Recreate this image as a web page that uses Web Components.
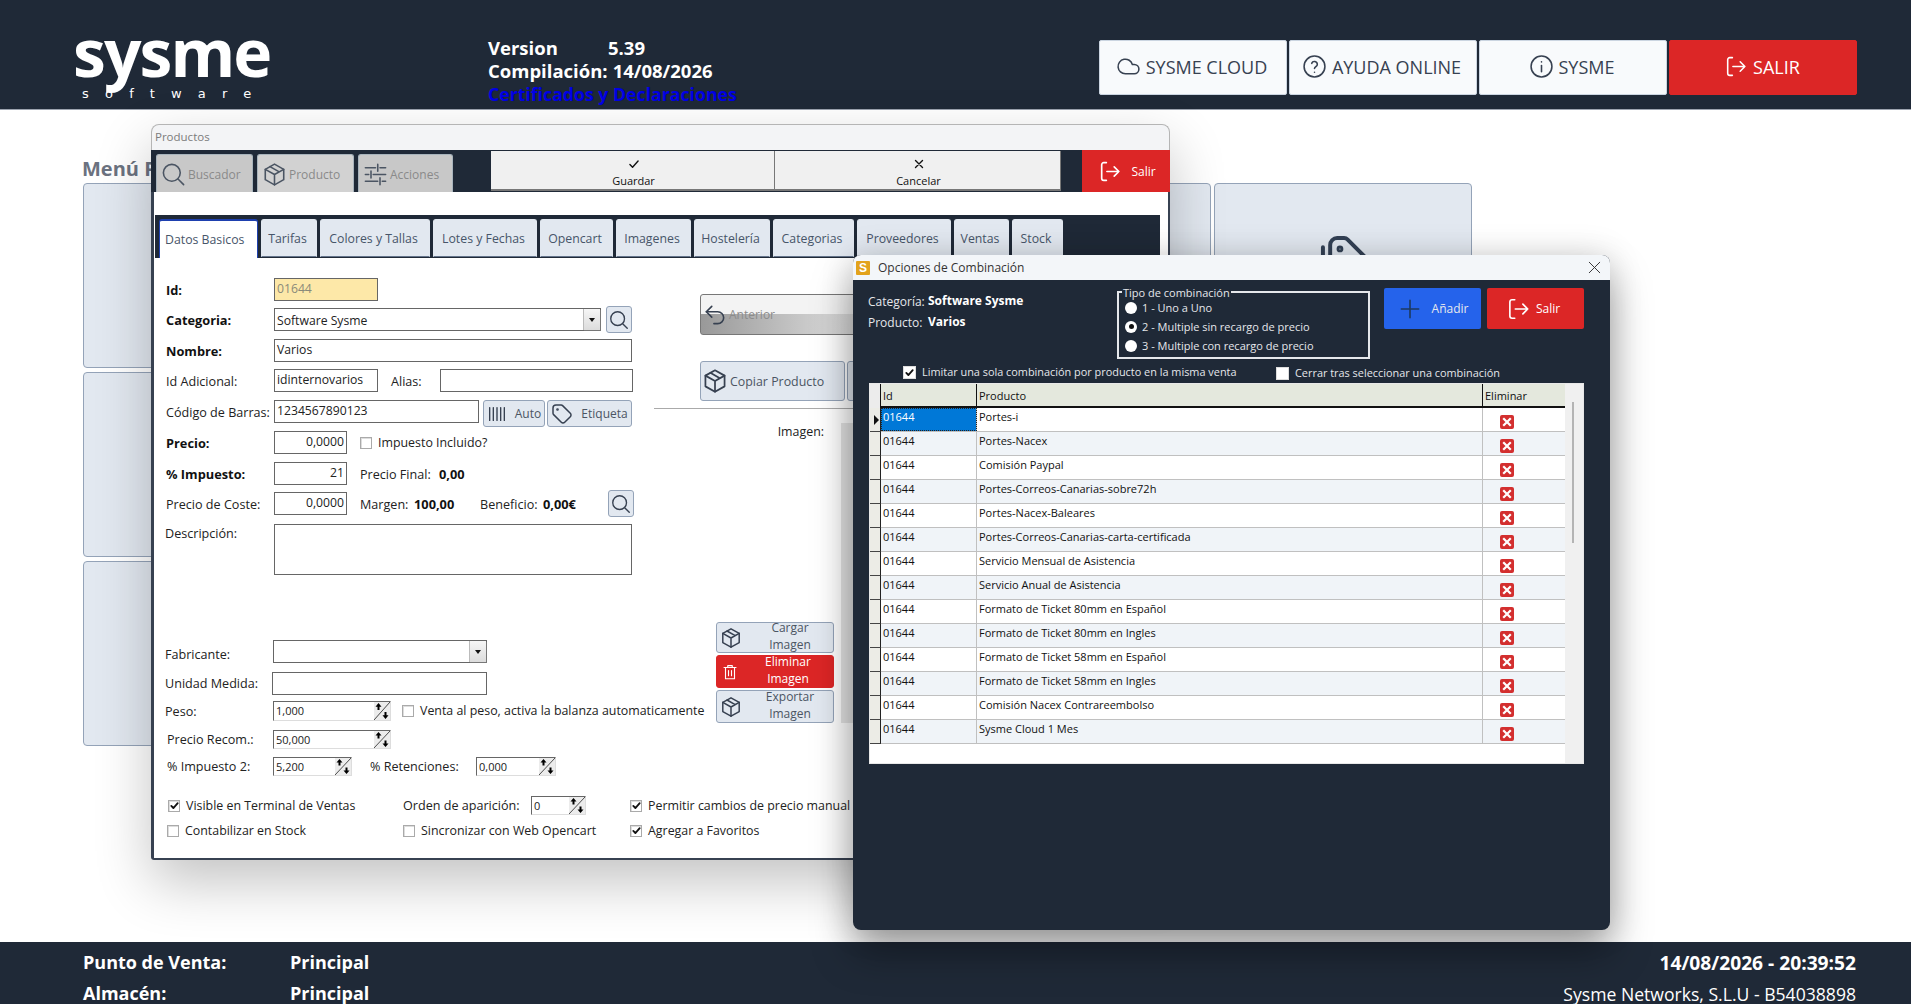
<!DOCTYPE html>
<html lang="es"><head><meta charset="utf-8"><title>Sysme</title>
<style>
html,body{margin:0;height:100%;overflow:hidden;background:#fff;font-family:"Open Sans","Noto Sans",sans-serif;font-size:12px;color:#222}
body{display:flex;flex-direction:column;position:relative}
</style></head><body>
<sy-header></sy-header>
<sy-menu heading="Menú Principal"></sy-menu>
<sy-footer></sy-footer>

<sy-window title="Productos" style="left:151px;top:124px;width:1019px;height:736px">
  <sy-product-bar></sy-product-bar>
  <sy-tabstrip></sy-tabstrip>
  <sy-panel>
    <div slot="left">
     <div style="--lab:2px">
      <sy-row style="margin-top:20px"><sy-lab w="108" b>Id:</sy-lab><sy-input w="104" bg="#fde8a8" c="#8a8a7a">01644</sy-input></sy-row>
      <sy-row style="margin-top:7px"><sy-lab w="108" b>Categoria:</sy-lab><sy-select w="327">Software Sysme</sy-select><sy-btn icon="search" w="26" h="27" isz="22" style="margin-left:5px"></sy-btn></sy-row>
      <sy-row style="margin-top:8px"><sy-lab w="108" b>Nombre:</sy-lab><sy-input w="358">Varios</sy-input></sy-row>
      <sy-row style="margin-top:7px"><sy-lab w="108">Id Adicional:</sy-lab><sy-input w="104">idinternovarios</sy-input><sy-lab w="49" style="margin-left:13px">Alias:</sy-lab><sy-input w="193"></sy-input></sy-row>
      <sy-row style="margin-top:8px"><sy-lab w="108">Código de Barras:</sy-lab><sy-input w="205">1234567890123</sy-input><sy-btn icon="barcode" w="62" h="27" isz="22" style="margin:4px 0 0 4px">Auto</sy-btn><sy-btn icon="tag" w="85" h="27" isz="24" style="margin:4px 0 0 2px">Etiqueta</sy-btn></sy-row>
      <sy-row style="margin-top:8px"><sy-lab w="108" b>Precio:</sy-lab><sy-input w="73" align="right">0,0000</sy-input><sy-check style="margin-left:13px">Impuesto Incluido?</sy-check></sy-row>
      <sy-row style="margin-top:8px"><sy-lab w="108" b>% Impuesto:</sy-lab><sy-input w="73" align="right">21</sy-input><sy-lab w="79" style="margin-left:13px">Precio Final:</sy-lab><sy-lab b>0,00</sy-lab></sy-row>
      <sy-row style="margin-top:7px"><sy-lab w="108">Precio de Coste:</sy-lab><sy-input w="73" align="right">0,0000</sy-input><sy-lab w="54" style="margin-left:13px">Margen:</sy-lab><sy-lab w="66" b>100,00</sy-lab><sy-lab w="63">Beneficio:</sy-lab><sy-lab w="65" b>0,00€</sy-lab><sy-btn icon="search" w="26" h="27" isz="22"></sy-btn></sy-row>
     </div>
      <sy-row style="margin-top:9px;height:51px;align-items:flex-start"><sy-lab w="109" style="margin-left:-1px;height:19px">Descripción:</sy-lab><sy-input w="358" h="51"></sy-input></sy-row>

      <sy-row style="margin-top:65px;--lab:6px"><sy-lab w="108" style="margin-left:-1px">Fabricante:</sy-lab><sy-select w="214"></sy-select></sy-row>
      <sy-row style="margin-top:9px"><sy-lab w="107" style="margin-left:-1px">Unidad Medida:</sy-lab><sy-input w="215"></sy-input></sy-row>
      <sy-row style="margin-top:6px;height:20px"><sy-lab w="108" style="margin-left:-1px">Peso:</sy-lab><sy-spin w="118">1,000</sy-spin><sy-check style="margin-left:11px">Venta al peso, activa la balanza automaticamente</sy-check></sy-row>
      <sy-row style="margin-top:9px;height:19px"><sy-lab w="106" style="margin-left:1px">Precio Recom.:</sy-lab><sy-spin w="118">50,000</sy-spin></sy-row>
      <sy-row style="margin-top:8px;height:19px"><sy-lab w="106" style="margin-left:1px">% Impuesto 2:</sy-lab><sy-spin w="79">5,200</sy-spin><sy-lab w="106" style="margin-left:18px">% Retenciones:</sy-lab><sy-spin w="80">0,000</sy-spin></sy-row>
      <sy-row style="margin-top:20px;height:19px"><sy-check checked w="235" style="margin-left:2px">Visible en Terminal de Ventas</sy-check><sy-lab w="128">Orden de aparición:</sy-lab><sy-spin w="55">0</sy-spin><sy-check checked style="margin-left:44px">Permitir cambios de precio manual</sy-check></sy-row>
      <sy-row style="margin-top:6px;height:19px"><sy-check w="236" style="margin-left:1px">Contabilizar en Stock</sy-check><sy-check w="227">Sincronizar con Web Opencart</sy-check><sy-check checked>Agregar a Favoritos</sy-check></sy-row>
    </div>
    <div slot="right">
      <sy-btn kind="anterior" icon="undo" w="300" h="41" isz="26" style="margin:36px 0 0 46px">Anterior</sy-btn>
      <sy-row style="margin:26px 0 0 46px;height:40px;overflow:visible"><sy-btn icon="box" left w="145" h="40" isz="28">Copiar Producto</sy-btn><sy-btn icon="box" w="145" h="40" isz="26" style="margin-left:2px"></sy-btn></sy-row>
      <sy-image-area></sy-image-area>
    </div>
  </sy-panel>
</sy-window>

<sy-window kind="modal" title="Opciones de Combinación" style="left:853px;top:255px;width:757px;height:675px">
  <sy-combo></sy-combo>
  <sy-grid>
    <sy-grow selected>Portes-i</sy-grow>
    <sy-grow>Portes-Nacex</sy-grow>
    <sy-grow>Comisión Paypal</sy-grow>
    <sy-grow>Portes-Correos-Canarias-sobre72h</sy-grow>
    <sy-grow>Portes-Nacex-Baleares</sy-grow>
    <sy-grow>Portes-Correos-Canarias-carta-certificada</sy-grow>
    <sy-grow>Servicio Mensual de Asistencia</sy-grow>
    <sy-grow>Servicio Anual de Asistencia</sy-grow>
    <sy-grow>Formato de Ticket 80mm en Español</sy-grow>
    <sy-grow>Formato de Ticket 80mm en Ingles</sy-grow>
    <sy-grow>Formato de Ticket 58mm en Español</sy-grow>
    <sy-grow>Formato de Ticket 58mm en Ingles</sy-grow>
    <sy-grow>Comisión Nacex Contrareembolso</sy-grow>
    <sy-grow>Sysme Cloud 1 Mes</sy-grow>
  </sy-grid>
</sy-window>

<script>
const ICONS={
 search:'<circle cx="10.5" cy="10.5" r="7.5"/><path d="M16 16l5 5"/>',
 box:'<path d="M12 2.8l8.2 4.6v9.2L12 21.2l-8.2-4.6V7.4z"/><path d="M12 12l8.2-4.6M12 12v9.2M12 12L3.8 7.4M8 5l8.2 4.7"/>',
 sliders:'<path d="M3 6h9M16 6h5M14 3v6M3 12h3M10 12h11M8 9v6M3 18h11M18 18h3M16 15v6"/>',
 logout:'<path d="M9 3.5H6.5a2 2 0 0 0-2 2v13a2 2 0 0 0 2 2H9"/><path d="M9.5 12H21M16.5 7.5L21 12l-4.500 4.500"/>',
 cloud:'<path d="M17.500 19H9a7 7 0 1 1 6.710-9h1.790a4.500 4.500 0 1 1 0 9z"/>',
 help:'<circle cx="12" cy="12" r="10"/><path d="M9.300 9a2.800 2.800 0 0 1 5.400 1c0 1.900-2.700 2.300-2.700 4"/><path d="M12 17.500v.1"/>',
 info:'<circle cx="12" cy="12" r="10"/><path d="M12 11v6"/><path d="M12 7.500v.1"/>',
 tag:'<circle cx="7.500" cy="7.500" r=".6"/><path d="M3 6v5.200a2 2 0 0 0 .6 1.400l7.700 7.700a2.400 2.400 0 0 0 3.400 0l5.600-5.600a2.400 2.400 0 0 0 0-3.400l-7.700-7.700A2 2 0 0 0 11.200 3H6a3 3 0 0 0-3 3z"/>',
 tags:'<circle cx="10.700" cy="7.700" r=".6"/><path d="M6.500 6a3 3 0 0 1 3-3h3a2 2 0 0 1 1.400.6l7.200 7.200a2.400 2.400 0 0 1 0 3.400l-5.600 5.600a2.400 2.400 0 0 1-3.400 0L7.100 12.800a2 2 0 0 1-.6-1.400z"/><path d="M3.400 7v5.500a2 2 0 0 0 .6 1.400l6 6"/>',
 barcode:'<path d="M4 5v14M8 5v14M12 5v14M16 5v14M20 5v14"/>',
 undo:'<path d="M9 14L4 9l5-5"/><path d="M4 9h10.500a5.500 5.500 0 0 1 0 11H11"/>',
 trash:'<path d="M4 6h16M9 6V3.500h6V6M6 6v15h12V6M10 10v7M14 10v7"/>',
 plus:'<path d="M12 4v16M4 12h16"/>',
 check:'<path d="M5 13l4.500 4.500L19 7"/>',
 x:'<path d="M6 6l12 12M18 6L6 18"/>'
};
function icon(n,s,c,w){return `<svg width="${s}" height="${s}" viewBox="0 0 24 24" fill="none" stroke="${c||'currentColor'}" stroke-width="${w||1.8}" stroke-linecap="round" stroke-linejoin="round" style="flex:none;display:block">${ICONS[n]}</svg>`}
function def(name,css,html){customElements.define(name,class extends HTMLElement{connectedCallback(){if(this.shadowRoot)return;const r=this.attachShadow({mode:'open'});r.innerHTML=`<style>${css}</style>`+(typeof html==='function'?html(this):html)}})}

/* Top bar */
def('sy-topbtn',`:host{display:flex;align-items:center;justify-content:center;gap:5px;width:188px;height:55px;box-sizing:border-box;background:#f8fafc;border:1px solid #cbd5e1;border-radius:2px;color:#374151;font-size:18px;white-space:nowrap;padding-bottom:2px}
svg{margin-left:-3px}
:host([red]){background:#dc2626;border-color:#dc2626;color:#fff}`,h=>icon(h.getAttribute('icon'),25,'currentColor',1.5)+'<slot></slot>');
def('sy-header',`:host{display:flex;flex:none;height:110px;box-sizing:border-box;background:#1f2937;border-bottom:1px solid #9ca3af;color:#fff;padding:0 54px 0 75px}
.logo{width:193px;flex:none;padding-top:18px;text-align:center}
.s{font:700 66px/66px "Open Sans",sans-serif;letter-spacing:-1.900px;margin-left:-2px}
.w{font:400 13px/14px "DejaVu Sans",sans-serif;letter-spacing:16.200px;margin-top:3px;white-space:nowrap;padding-left:7px;text-align:left}
.v{margin-left:220px;padding-top:36px;font-weight:700;font-size:18.500px;line-height:23px;white-space:nowrap;flex:none}
.v span{display:inline-block;width:120px}.v span.c{width:auto;margin-right:5px}
.l{color:#0000e6;font-size:17.700px;padding-top:1px}
.b{margin-left:auto;display:flex;gap:2px;padding-top:40px}`,
`<div class="logo"><div class="s">sysme</div><div class="w">software</div></div>
<div class="v"><div><span>Version</span>5.39</div><div><span class="c">Compilación:</span>14/08/2026</div><div class="l">Certificados y Declaraciones</div></div>
<div class="b"><sy-topbtn icon="cloud">SYSME CLOUD</sy-topbtn><sy-topbtn icon="help">AYUDA ONLINE</sy-topbtn><sy-topbtn icon="info">SYSME</sy-topbtn><sy-topbtn icon="logout" red>SALIR</sy-topbtn></div>`);
def('sy-footer',`:host{display:flex;flex:none;justify-content:space-between;height:62px;box-sizing:border-box;background:#1f2937;color:#fff;padding:5px 55px 0 83px;font-size:18px;line-height:31px;overflow:hidden;white-space:nowrap}
b{font-weight:700}.r{display:flex}.r b:first-child{width:207px}.e{text-align:right}.e b{font-size:19.200px}.e div{font-weight:400;font-size:17.600px}`,
`<div><div class="r"><b>Punto de Venta:</b><b>Principal</b></div><div class="r"><b>Almacén:</b><b>Principal</b></div></div>
<div class="e"><b>14/08/2026 - 20:39:52</b><div>Sysme Networks, S.L.U - B54038898</div></div>`);

/* Background menu */
def('sy-menu',`:host{display:block;flex:1;min-height:0;overflow:hidden;padding:45px 0 0 82px;box-sizing:border-box}
h2{margin:0 0 1px;font:700 20px/27px "Open Sans",sans-serif;color:#6b7280}
.g{display:grid;grid-template-columns:repeat(4,279.750px) 258px;grid-auto-rows:185px;gap:4px 3px;margin-left:1px}
.c{background:#e2e8f0;border:1px solid #94a3b8;border-radius:4px;box-sizing:border-box;display:flex;justify-content:center;padding-top:47px;color:#1f2937}`,
h=>`<h2>${h.getAttribute('heading')}</h2><div class="g">${Array.from({length:15},(_,i)=>`<div class="c">${i==4?icon('tags',56,'#334155',1.700):''}</div>`).join('')}</div>`);

/* Windows */
def('sy-window',`:host{position:absolute;display:flex;flex-direction:column;box-sizing:border-box;background:#fff;border-radius:8px 8px 3px 3px;box-shadow:0 22px 55px rgba(0,0,0,.24);overflow:visible;z-index:5}
.t{height:26px;flex:none;box-sizing:border-box;background:#f3f4f6;border:1px solid #b5b5b5;border-bottom:0;border-radius:8px 8px 0 0;color:#7c7c7c;font-size:11.500px;line-height:24px;padding-left:3px}
.b{flex:1;min-height:0;display:flex;flex-direction:column;border:solid #374151;border-width:0 2px 2px 3px;border-radius:0 0 3px 3px}
:host([kind=modal]){z-index:6;background:#1f2937;border-radius:8px;box-shadow:0 22px 40px rgba(0,0,0,.36),0 0 34px rgba(0,0,0,.14)}
:host([kind=modal]) .t{height:25px;background:#f3f6f9;border:0;color:#333;font-size:12px;display:flex;align-items:center;justify-content:flex-start;padding:0 0 0 3px;line-height:25px}
:host([kind=modal]) .b{border:0}
.ic{width:14px;height:14px;background:#e2a21b;color:#fff;font:700 12px/14px "Liberation Sans",sans-serif;text-align:center;margin-right:8px;border-radius:1px;flex:none}
.cl{margin-left:auto;margin-right:5px;color:#333}`,
h=>h.getAttribute('kind')==='modal'
 ?`<div class="t"><span class="ic">S</span><span>${h.getAttribute('title')}</span><span class="cl">${icon('x',21,'#333',1.100)}</span></div><div class="b"><slot></slot></div>`
 :`<div class="t">${h.getAttribute('title')}</div><div class="b"><slot></slot></div>`);

/* Product toolbar */
def('sy-ptab',`:host{display:flex;align-items:center;gap:1px;box-sizing:border-box;height:38px;margin-top:4px;background:#c8c8c8;border:1px solid #a8b4bc;border-bottom:0;border-radius:3px 3px 0 0;padding:2px 0 0 3px;color:#8a8a8a;font-size:12px}
:host([on]){background:#d2d2d2}`,h=>icon(h.getAttribute('icon'),27,'#4b5563',1.400)+'<slot></slot>');
def('sy-cmd',`:host{display:flex;flex-direction:column;align-items:center;box-sizing:border-box;height:40px;margin-top:1px;background:#f0f0f0;border:1px solid #777;border-width:0 1px 2px 0;color:#111;font-size:11px;line-height:14px;padding:6px 0 0 2px}`,
h=>icon(h.getAttribute('icon'),14,'#111',2.400)+'<span style="margin-top:3px"><slot></slot></span>');
def('sy-product-bar',`:host{display:flex;flex:none;height:42px;background:#1f2937;position:relative;margin-left:-3px;margin-right:-2px;padding-left:5px}
.tabs{display:flex;gap:4px}
.salir{margin-left:auto;width:88px;background:#dc2626;color:#fff;display:flex;align-items:center;justify-content:center;gap:9px;font-size:12px;padding-left:1px;box-sizing:border-box}`,
`<div class="tabs"><sy-ptab icon="search" style="width:97px">Buscador</sy-ptab><sy-ptab icon="box" on style="width:97px">Producto</sy-ptab><sy-ptab icon="sliders" style="width:95px">Acciones</sy-ptab></div>
<sy-cmd icon="check" style="width:284px;margin-left:38px">Guardar</sy-cmd><sy-cmd icon="x" style="width:286px">Cancelar</sy-cmd>
<div class="salir">${icon('logout',25,'#fff',1.600)}<span>Salir</span></div>`);
def('sy-tab',`:host{display:flex;align-items:center;justify-content:center;box-sizing:border-box;height:38px;background:#e2e8f0;border:1px solid #e2e8f0;border-bottom:1px solid #64748b;border-radius:3px 3px 0 0;color:#475569;font-size:12.300px;white-space:nowrap;padding-right:3px}
:host([on]){background:#fff;border-color:#1e40af #1e40af #fff #1e40af;border-width:2px 1px 0 1px;height:39px;justify-content:flex-start;padding:0 0 0 5px}`,'<slot></slot>');
def('sy-tabstrip',`:host{display:flex;flex:none;gap:3px;height:43px;box-sizing:border-box;margin:23px 8px 0 1px;padding:4px 0 0 4px;background:#1f2937}`,
()=>[['Datos Basicos',99,1],['Tarifas',56],['Colores y Tallas',110],['Lotes y Fechas',104],['Opencart',73],['Imagenes',75],['Hostelería',76],['Categorias',81],['Proveedores',94],['Ventas',55],['Stock',51]].map(t=>`<sy-tab ${t[2]?'on':''} style="width:${t[1]}px">${t[0]}</sy-tab>`).join(''));

/* Form parts */
def('sy-panel',`:host{display:flex;flex:1;min-height:0}
.l{width:500px;flex:none;box-sizing:border-box;padding-left:12px}
.r{flex:1;min-width:0}`,'<div class="l"><slot name="left"></slot></div><div class="r"><slot name="right"></slot></div>');
def('sy-row',`:host{display:flex;align-items:center;height:23px;white-space:nowrap;color:#222}`,'<slot></slot>');
def('sy-lab',`:host{display:block;flex:none;line-height:19px;font-size:12.600px;white-space:nowrap;padding-top:var(--lab,0);box-sizing:content-box}
:host([b]){font-weight:700;color:#111;font-size:12.800px}`,h=>{if(h.hasAttribute('w'))h.style.width=h.getAttribute('w')+'px';return '<slot></slot>'});
def('sy-input',`:host{display:block;flex:none;box-sizing:border-box;height:23px;background:#fff;border:1px solid #666;padding:0 2px;line-height:20px;font-size:12.200px;color:#222;white-space:nowrap;overflow:hidden}
:host([align=right]){text-align:right}`,h=>{h.style.width=h.getAttribute('w')+'px';if(h.getAttribute('h'))h.style.height=h.getAttribute('h')+'px';if(h.getAttribute('bg'))h.style.background=h.getAttribute('bg');if(h.getAttribute('c'))h.style.color=h.getAttribute('c');return '<slot></slot>'});
def('sy-select',`:host{display:flex;flex:none;align-items:center;box-sizing:border-box;height:23px;background:#fff;border:1px solid #666;padding-left:2px;font-size:12.200px;color:#222}
span{flex:1;padding-top:2px}.a{width:16px;height:21px;background:linear-gradient(#f6f6f6,#dcdcdc);border-left:1px solid #bbb;box-shadow:1px 1px 0 #777;display:flex;align-items:center;justify-content:center;flex:none}
.a i{border:solid transparent;border-width:4px 3.500px 0;border-top-color:#111;display:block}`,h=>{h.style.width=h.getAttribute('w')+'px';return '<span><slot></slot></span><div class="a"><i></i></div>'});
def('sy-spin',`:host{display:flex;flex:none;box-sizing:border-box;height:100%;background:#fff;border:1px solid #999;border-right-color:#ddd;border-bottom-color:#ddd;border-left-color:#666;border-top-color:#666;font-size:11px;line-height:17px;padding-left:2px;color:#222;overflow:hidden}
span{flex:1}svg{flex:none;display:block;background:#ececec}`,h=>{h.style.width=h.getAttribute('w')+'px';return `<span><slot></slot></span><svg width="16" height="100%" viewBox="0 0 16 19" preserveAspectRatio="none"><path d="M0 19L16 0" stroke="#444" stroke-width="1"/><path d="M4.500 1l3 4h-2v3.500h-2V5h-2zM11.500 18l-3-4h2v-3.500h2V14h2z" fill="#000"/></svg>`});
def('sy-check',`:host{display:flex;flex:none;align-items:center;font-size:12.400px;white-space:nowrap;line-height:18px}
.k{width:10px;height:10px;background:#fff;border:1px solid #aaa;box-shadow:inset 1px 1px 0 #ddd;margin-right:6px;flex:none;display:flex;align-items:center;justify-content:center}
:host([dark]){color:#e5e7eb;font-size:10.900px}
:host([dark]) .k{width:11px;height:11px;border:1px solid #ddd;box-shadow:none}`,h=>{if(h.hasAttribute('w'))h.style.width=h.getAttribute('w')+'px';return `<div class="k">${h.hasAttribute('checked')?icon('check',11,'#111',4):''}</div><slot></slot>`});
def('sy-btn',`:host{display:flex;flex:none;align-items:center;box-sizing:border-box;background:#e2e8f0;border:1px solid #94a3b8;border-radius:3px;color:#4b5563;font-size:12px;white-space:nowrap;padding-left:2px;gap:4px;overflow:hidden;line-height:17px}
.s{flex:1;text-align:center;white-space:nowrap}
:host([left]) .s{text-align:left;padding-top:1px}
:host([left]){gap:1px;font-size:12.400px;padding-left:0}
:host([kind=anterior]){background:linear-gradient(#f3f3f3 0 50%,transparent 50%),linear-gradient(90deg,#999,#ddd 50%,#ccc);border-color:#777;color:#8c8c8c;padding-left:1px;gap:1px}
:host([kind=anterior]) .s{flex:none}
:host([kind=red]){background:#dc2626;border-color:#dc2626;color:#fff}
:host([stack]) .s{padding-bottom:3px}
:host([empty]){justify-content:center;padding:0}:host([empty]) .s{display:none}`,
h=>{h.style.width=h.getAttribute('w')+'px';h.style.height=h.getAttribute('h')+'px';if(!h.textContent.trim())h.setAttribute('empty','');return icon(h.getAttribute('icon'),+h.getAttribute('isz')||20,h.getAttribute('kind')==='red'?'#fff':'#374151',1.500)+'<span class="s"><slot></slot></span>'});
def('sy-image-area',`:host{display:block}
hr{border:0;border-top:1px solid #aaa;margin:7px 0 0;height:0}
.w{display:flex;margin-top:14px}
.a{width:187px;flex:none;position:relative;height:300px;display:flex;flex-direction:column}
.n{text-align:right;padding-right:17px;line-height:17px;font-size:12.400px;color:#222}
.bs{margin:auto 7px 0 62px;display:flex;flex-direction:column;gap:2px}
.p{flex:1;height:300px;background:#e6e6e6}`,
`<hr><div class="w"><div class="a"><div class="n">Imagen:</div><div class="bs"><sy-btn stack icon="box" w="118" h="31" isz="24">Cargar<br>Imagen</sy-btn><sy-btn stack icon="trash" kind="red" w="118" h="33" isz="18" style="padding-left:4px">Eliminar<br>Imagen</sy-btn><sy-btn stack icon="box" w="118" h="33" isz="24">Exportar<br>Imagen</sy-btn></div></div><div class="p"></div></div>`);

/* Combination dialog */
def('sy-radio',`:host{display:flex;align-items:center;height:19px;gap:5px;font-size:11px;color:#e5e7eb;white-space:nowrap}
i{width:12px;height:12px;border-radius:50%;background:#fff;display:flex;align-items:center;justify-content:center;flex:none}
b{width:5px;height:5px;border-radius:50%;background:#111}`,h=>`<i>${h.hasAttribute('on')?'<b></b>':''}</i><slot></slot>`);
def('sy-action',`:host{display:flex;align-items:center;justify-content:center;gap:9px;width:97px;height:41px;border-radius:2px;color:#e5e7eb;font-size:12px;background:#2563eb;box-sizing:border-box}
:host([red]){background:#dc2626;color:#fff;justify-content:flex-start;padding-left:18px;gap:5px}`,h=>icon(h.getAttribute('icon'),26,h.hasAttribute('red')?'#fff':'#1e3a5f',1.500)+'<slot></slot>');
def('sy-combo',`:host{display:block;flex:none;height:103px;color:#e5e7eb;font-size:12px}
.top{display:flex}
.i{width:249px;margin-left:15px;flex:none;padding-top:11px;line-height:21px;white-space:nowrap}
.i div{display:flex}.i span{width:60px;flex:none}.i b{color:#fff;font-weight:700;margin-top:-1px}
fieldset{box-sizing:border-box;margin:11px 0 0;padding:5px 0 0 6px;width:253px;height:68px;border:2px solid #e5e7eb;position:relative}
legend{position:absolute;top:-7px;left:3px;background:#1f2937;padding:0 1px;font-size:11px;line-height:13px}
.a{display:flex;gap:6px;margin:8px 0 0 14px}
.c{display:flex;height:20px;margin-top:3px;padding-left:50px}`,
`<div class="top"><div class="i"><div><span>Categoría:</span><b>Software Sysme</b></div><div><span>Producto:</span><b>Varios</b></div></div>
<fieldset><legend>Tipo de combinación</legend><sy-radio>1 - Uno a Uno</sy-radio><sy-radio on>2 - Multiple sin recargo de precio</sy-radio><sy-radio>3 - Multiple con recargo de precio</sy-radio></fieldset>
<div class="a"><sy-action icon="plus">Añadir</sy-action><sy-action icon="logout" red>Salir</sy-action></div></div>
<div class="c"><sy-check dark checked style="width:373px">Limitar una sola combinación por producto en la misma venta</sy-check><sy-check dark style="margin-top:2px">Cerrar tras seleccionar una combinación</sy-check></div>`);
def('sy-grid',`:host{display:block;flex:none;margin-left:16px;width:715px;height:381px;box-sizing:border-box;background:#fff;border:1px solid #e8e8e8;position:relative;font-size:11px;color:#111}
.h{display:grid;grid-template-columns:11px 96px 506px 82px;height:24px;box-sizing:border-box;background:#e4e8dd;border-bottom:2px solid #111;line-height:24px}
.h div{border-right:1px solid #111;padding-left:2px}.h div:last-child{border-right:0}.h div:first-child{padding:0;background:#ececec}
.gut{position:absolute;top:0;right:0;bottom:0;width:18px;background:#f0f0f0}
.th{position:absolute;right:9px;top:18px;width:2px;height:141px;background:#b4b4b4}`,
`<div class="h"><div></div><div>Id</div><div>Producto</div><div>Eliminar</div></div><slot></slot><div class="gut"><div class="th"></div></div>`);
def('sy-grow',`:host{display:grid;grid-template-columns:11px 96px 506px 82px;height:24px;box-sizing:border-box;width:695px;background:#fff;border-bottom:1px solid #c0c0c0;line-height:18px;font-size:11px;color:#111}
:host(:nth-child(even)){background:#f0f4f8}
.s{background:#ecece6;border-right:1px solid #222;border-bottom:1px solid #444;margin-bottom:-1px;display:flex;align-items:center}
.s i{border:solid transparent;border-width:5px 0 5px 5px;border-left-color:#111;margin-left:4px}
.id,.p{border-right:1px solid #c0c0c0;padding-left:2px;white-space:nowrap}
.sel{background:#0078d7;color:#fff;outline:1px dotted #222;outline-offset:-1px}
.d{display:flex;justify-content:flex-start;padding:7px 0 0 17px}
.x{width:14px;height:14px;border-radius:2px;background:#d32f2f;display:block}`,
h=>`<div class="s">${h.hasAttribute('selected')?'<i></i>':''}</div><div class="id ${h.hasAttribute('selected')?'sel':''}">01644</div><div class="p"><slot></slot></div><div class="d"><svg class="x" viewBox="0 0 14 14"><path d="M4 4l6 6M10 4l-6 6" stroke="#fff" stroke-width="2.200" stroke-linecap="square"/></svg></div>`);
</script>
</body></html>
